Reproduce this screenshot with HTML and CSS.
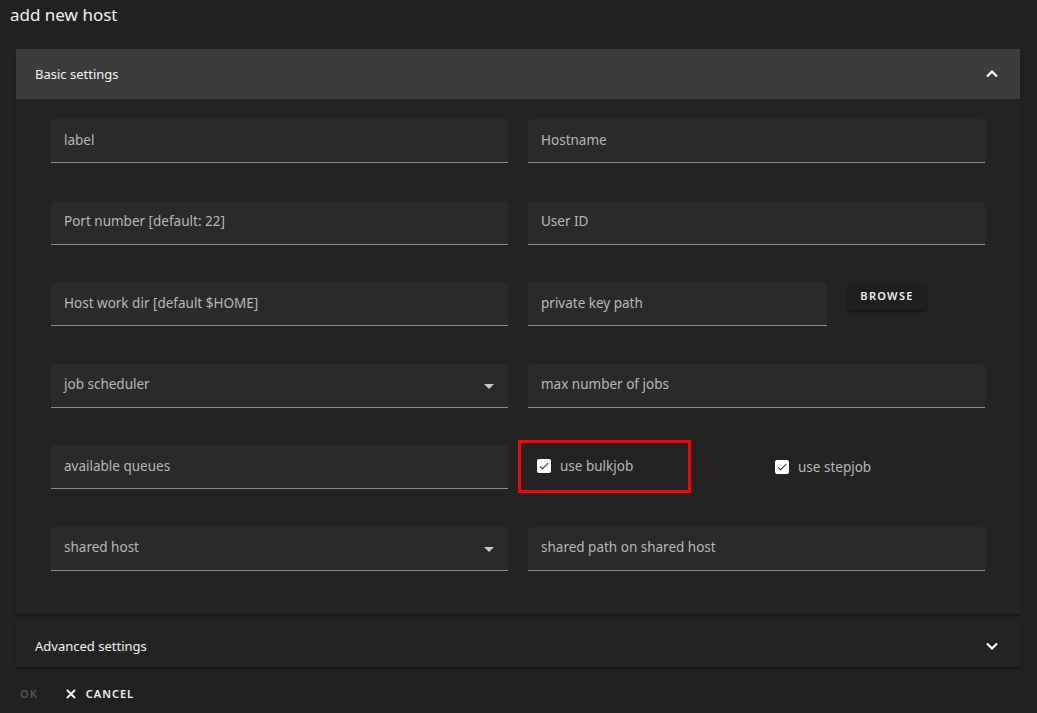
FILE: index.html
```html
<!DOCTYPE html>
<html>
<head>
<meta charset="utf-8">
<link rel="stylesheet" href="styles.css">
</head>
<body>
<div class="dialog">
  <div class="title">add new host</div>
  <div class="panels">
    <div class="panel">
      <div class="panel-header active">
        <span>Basic settings</span>
        <svg class="chev" width="16" height="16" viewBox="0 0 16 16"><path d="M3 10.5L8 5.5l5 5" fill="none" stroke="#fff" stroke-width="2.2"/></svg>
      </div>
      <div class="panel-body">
        <div class="row">
          <div class="field"><span class="ph">label</span></div>
          <div class="field"><span class="ph">Hostname</span></div>
        </div>
        <div class="row">
          <div class="field"><span class="ph">Port number [default: 22]</span></div>
          <div class="field"><span class="ph">User ID</span></div>
        </div>
        <div class="row">
          <div class="field"><span class="ph">Host work dir [default $HOME]</span></div>
          <div class="col-split">
            <div class="field short"><span class="ph">private key path</span></div>
            <button class="btn">BROWSE</button>
          </div>
        </div>
        <div class="row">
          <div class="field select"><span class="ph">job scheduler</span><span class="arrow"></span></div>
          <div class="field"><span class="ph">max number of jobs</span></div>
        </div>
        <div class="row">
          <div class="field"><span class="ph">available queues</span></div>
          <div class="checks">
            <div class="highlight">
              <label class="check"><span class="box"><svg width="12" height="12" viewBox="0 0 24 24"><path d="M9 16.17L4.83 12l-1.42 1.41L9 19 21 7l-1.41-1.41z" fill="#333"/></svg></span>use bulkjob</label>
            </div>
            <label class="check second"><span class="box"><svg width="12" height="12" viewBox="0 0 24 24"><path d="M9 16.17L4.83 12l-1.42 1.41L9 19 21 7l-1.41-1.41z" fill="#333"/></svg></span>use stepjob</label>
          </div>
        </div>
        <div class="row">
          <div class="field select"><span class="ph">shared host</span><span class="arrow"></span></div>
          <div class="field"><span class="ph">shared path on shared host</span></div>
        </div>
      </div>
    </div>
    <div class="panel">
      <div class="panel-header collapsed">
        <span>Advanced settings</span>
        <svg class="chev" width="16" height="16" viewBox="0 0 16 16"><path d="M3 5.5L8 10.5l5-5" fill="none" stroke="#fff" stroke-width="2.2"/></svg>
      </div>
    </div>
  </div>
  <div class="actions">
    <span class="ok">OK</span>
    <span class="cancel"><svg width="10" height="10" viewBox="0 0 10 10"><path d="M1 1L9 9M9 1L1 9" stroke="#fff" stroke-width="1.8"/></svg>CANCEL</span>
  </div>
</div>
</body>
</html>
```

FILE: styles.css
```css
html, body {
  margin: 0;
  padding: 0;
  background: #212121;
  font-family: "Noto Sans", "Open Sans", sans-serif;
  color: #fff;
}
.dialog {
  width: 1037px;
  height: 713px;
  overflow: hidden;
}
.title {
  font-size: 17px;
  line-height: 30px;
  padding: 0 0 0 10px;
  height: 49px;
  color: #f0f0f0;
}
.panels {
  margin: 0 16px 0 16px;
  width: 1004px;
}
.panel {
  background: #232323;
  box-shadow: 0 2px 2px rgba(0,0,0,0.35);
  margin-bottom: 3px;
}
.panel-header {
  height: 50px;
  display: flex;
  align-items: center;
  justify-content: space-between;
  padding: 0 20px 0 19px;
  font-size: 13px;
  color: #f2f2f2;
}
.panel-header.active {
  background: #3c3c3c;
}
.panel-header.collapsed {
  box-sizing: border-box;
  padding-top: 9px;
}
.panel-body {
  padding: 20px 35px 43px 35px;
  display: flex;
  flex-direction: column;
  gap: 37.6px;
}
.row {
  display: flex;
  gap: 20px;
  height: 44px;
}
.field {
  flex: 0 0 457px;
  height: 44px;
  box-sizing: border-box;
  background: #2a2a2a;
  border-radius: 4px 4px 0 0;
  border-bottom: 1px solid #8e8e8e;
  display: flex;
  align-items: center;
  padding: 0 13px 2px 13px;
  font-size: 13.5px;
  color: #b8b8b8;
  position: relative;
}
.field.short {
  flex: 0 0 299px;
}
.field.select {
  justify-content: space-between;
}
.arrow {
  width: 0;
  height: 0;
  border-left: 5px solid transparent;
  border-right: 5px solid transparent;
  border-top: 5px solid #c8c8c8;
  margin-right: 1px;
  margin-top: 5px;
}
.col-split {
  display: flex;
  gap: 20px;
  align-items: flex-start;
}
.btn {
  margin-top: 1px;
  width: 80px;
  height: 27px;
  background: #1e1e1e;
  border: none;
  border-radius: 3px;
  box-shadow: 0 2px 2px rgba(0,0,0,0.45);
  color: #eee;
  font-family: "Noto Sans", sans-serif;
  font-size: 11px;
  font-weight: 600;
  letter-spacing: 1.3px;
  padding: 0 0 2px 0;
}
.checks {
  display: flex;
  align-items: center;
  position: relative;
}
.highlight {
  width: 173px;
  height: 53px;
  box-sizing: border-box;
  border: 3px solid #ff0000;
  margin-left: -10px;
  margin-top: -2px;
  display: flex;
  align-items: center;
  padding-left: 16px;
}
.check {
  display: flex;
  align-items: center;
  font-size: 13.5px;
  color: #b8b8b8;
  gap: 9px;
}
.check.second {
  margin-left: 84px;
  margin-top: -1px;
}
.box {
  width: 14px;
  height: 14px;
  background: #fff;
  border-radius: 2px;
  display: flex;
  align-items: center;
  justify-content: center;
}
.actions {
  display: flex;
  align-items: center;
  height: 44px;
  padding: 4px 0 0 20px;
  box-sizing: border-box;
  font-size: 11px;
  font-weight: 600;
  letter-spacing: 1px;
}
.ok {
  color: #555;
  margin-right: 28px;
}
.cancel {
  color: #f0f0f0;
  display: flex;
  align-items: center;
  gap: 10px;
}
```
